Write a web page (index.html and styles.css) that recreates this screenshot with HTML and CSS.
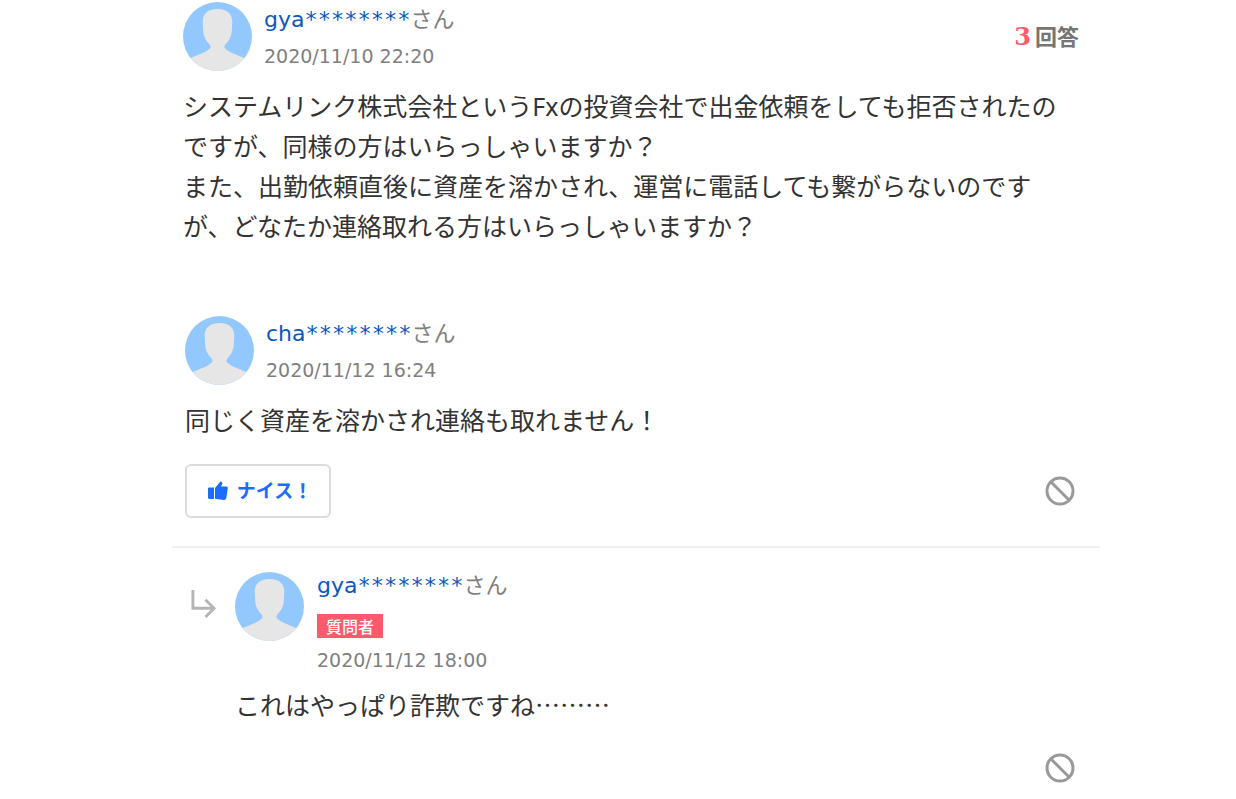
FILE: index.html
```html
<!DOCTYPE html>
<html lang="ja">
<head>
<meta charset="utf-8">
<title>質問と回答</title>
<link rel="stylesheet" href="styles.css">
</head>
<body>
<svg class="defs" aria-hidden="true">
  <defs>
    <clipPath id="round"><circle cx="35" cy="35" r="35"/></clipPath>
    <symbol id="avatar" viewBox="0 0 70 70">
      <g clip-path="url(#round)">
        <rect width="70" height="70" fill="#93c8fe"/>
        <path fill="#e6e6e6" d="M35 7C25 7 20 12 20 20L20.500 30C21 36 24 40 27 43Q29 45.500 27 47.500C22 52 14 54 5 58V72H65V58C56 54 48 52 43 47.500Q41 45.500 43 43C46 40 49 36 49.500 30L50 20C50 12 45 7 35 7z"/>
      </g>
    </symbol>
    <symbol id="block" viewBox="0 0 30 30">
      <circle cx="15" cy="15" r="13" fill="none" stroke="#999" stroke-width="3"/>
      <path d="M6 6L24 24" stroke="#999" stroke-width="3"/>
    </symbol>
  </defs>
</svg>
<main class="thread">
  <article class="question">
    <header class="head">
      <svg class="avatar" aria-hidden="true"><use href="#avatar"/></svg>
      <div class="meta">
        <p class="name"><a href="#">gya<span class="mask">********</span></a>さん</p>
        <time class="date">2020/11/10 22:20</time>
      </div>
      <p class="count"><strong>3</strong>回答</p>
    </header>
    <p class="text">システムリンク株式会社というFxの投資会社で出金依頼をしても拒否されたのですが、同様の方はいらっしゃいますか？<br>また、出勤依頼直後に資産を溶かされ、運営に電話しても繋がらないのですが、どなたか連絡取れる方はいらっしゃいますか？</p>
  </article>
  <article class="answer">
    <header class="head">
      <svg class="avatar" aria-hidden="true"><use href="#avatar"/></svg>
      <div class="meta">
        <p class="name"><a href="#">cha<span class="mask">********</span></a>さん</p>
        <time class="date">2020/11/12 16:24</time>
      </div>
    </header>
    <p class="text">同じく資産を溶かされ連絡も取れません！</p>
    <div class="actions">
      <button class="nice" type="button">
        <svg class="thumb" viewBox="0 0 20 20" aria-hidden="true"><path fill="#1a6dff" d="M0 7.500Q0 6.500 1 6.500H6V18H1.500Q0 18 0 16.500zM7 7L12 1Q13 0 14 1.200Q14.600 2 14.200 3.200L13 5.500H18.500Q20 5.500 19.800 7L18.300 17Q18 19 16 19L7 17.800z"/></svg>
        <span>ナイス！</span>
      </button>
      <button class="report" type="button" aria-label="違反報告"><svg aria-hidden="true"><use href="#block"/></svg></button>
    </div>
  </article>
  <article class="reply">
    <svg class="arrow" viewBox="0 0 26 30" aria-hidden="true"><path fill="none" stroke="#b5b5b5" stroke-width="3" d="M2 1V20H23M15 11L24 20L15 29"/></svg>
    <div class="reply-body">
      <header class="head">
        <svg class="avatar" aria-hidden="true"><use href="#avatar"/></svg>
        <div class="meta">
          <p class="name"><a href="#">gya<span class="mask">********</span></a>さん</p>
          <span class="badge">質問者</span>
          <time class="date">2020/11/12 18:00</time>
        </div>
      </header>
      <p class="text">これはやっぱり詐欺ですね<span class="dots">………</span></p>
      <div class="actions">
        <button class="report" type="button" aria-label="違反報告"><svg aria-hidden="true"><use href="#block"/></svg></button>
      </div>
    </div>
  </article>
</main>
</body>
</html>
```
FILE: styles.css
```css
* { box-sizing: border-box; }
body {
  margin: 0;
  background: #fff;
  color: #333;
  font-family: "Noto Sans", "Noto Sans CJK JP", sans-serif;
}
p { margin: 0; }
svg { display: block; }
button { background: none; border: 0; padding: 0; cursor: pointer; }
.defs { position: absolute; width: 0; height: 0; }
.thread { padding: 2px 136px 0 172px; }
.question { padding: 0 21px 0 11px; }
.answer {
  margin-top: 70px;
  padding: 0 25px 28px 13px;
  border-bottom: 2px solid #f0f0f0;
}
.head { display: flex; align-items: flex-start; gap: 12px; }
.avatar { width: 69px; height: 69px; flex: none; }
.meta { display: flex; flex-direction: column; align-items: flex-start; }
.name, .date {
  font-family: "DejaVu Sans", "Noto Sans CJK JP", sans-serif;
  line-height: 36px;
  color: #808080;
}
.name { font-size: 22px; }
.name a { color: #0a58c0; text-decoration: none; }
.mask { font-family: "DejaVu Sans Mono", monospace; }
.date { font-size: 19px; }
.count {
  display: flex;
  align-items: baseline;
  gap: 4px;
  margin-left: auto;
  font-family: "Noto Sans CJK JP", sans-serif;
  font-size: 22px;
  font-weight: 700;
  line-height: 66px;
  color: #757575;
}
.count strong { font-family: "DejaVu Serif", serif; font-size: 24px; color: #ff5a6b; }
.text { margin-top: 12px; font-size: 25px; line-height: 40px; }
.dots { font-family: "Noto Sans CJK JP", sans-serif; }
.actions { display: flex; align-items: center; justify-content: space-between; margin-top: 24px; }
.nice {
  display: flex;
  align-items: center;
  justify-content: center;
  gap: 9px;
  width: 146px;
  height: 54px;
  padding: 0 0 4px 4px;
  border: 2px solid #dcdcdc;
  border-radius: 6px;
  color: #1a6dff;
  font-family: "Noto Sans CJK JP", sans-serif;
  font-size: 19px;
  font-weight: 700;
}
.thumb { width: 20px; height: 20px; margin-top: 4px; }
.report { margin-left: auto; }
.report svg { width: 30px; height: 30px; }
.reply { display: flex; gap: 19px; padding: 24px 25px 16px 19px; }
.arrow { width: 25px; height: 29px; margin-top: 17px; flex: none; }
.reply-body { flex: 1; }
.reply .avatar { margin-right: 1px; }
.reply .name { line-height: 28px; }
.reply .text { margin-top: 6px; }
.reply .actions { margin-top: 28px; }
.badge {
  margin: 14px 0 4px;
  padding: 0 9px;
  background: #ff5a6b;
  color: #fff;
  font-family: "Noto Sans CJK JP", sans-serif;
  font-size: 16px;
  font-weight: 500;
  line-height: 24px;
}
```
